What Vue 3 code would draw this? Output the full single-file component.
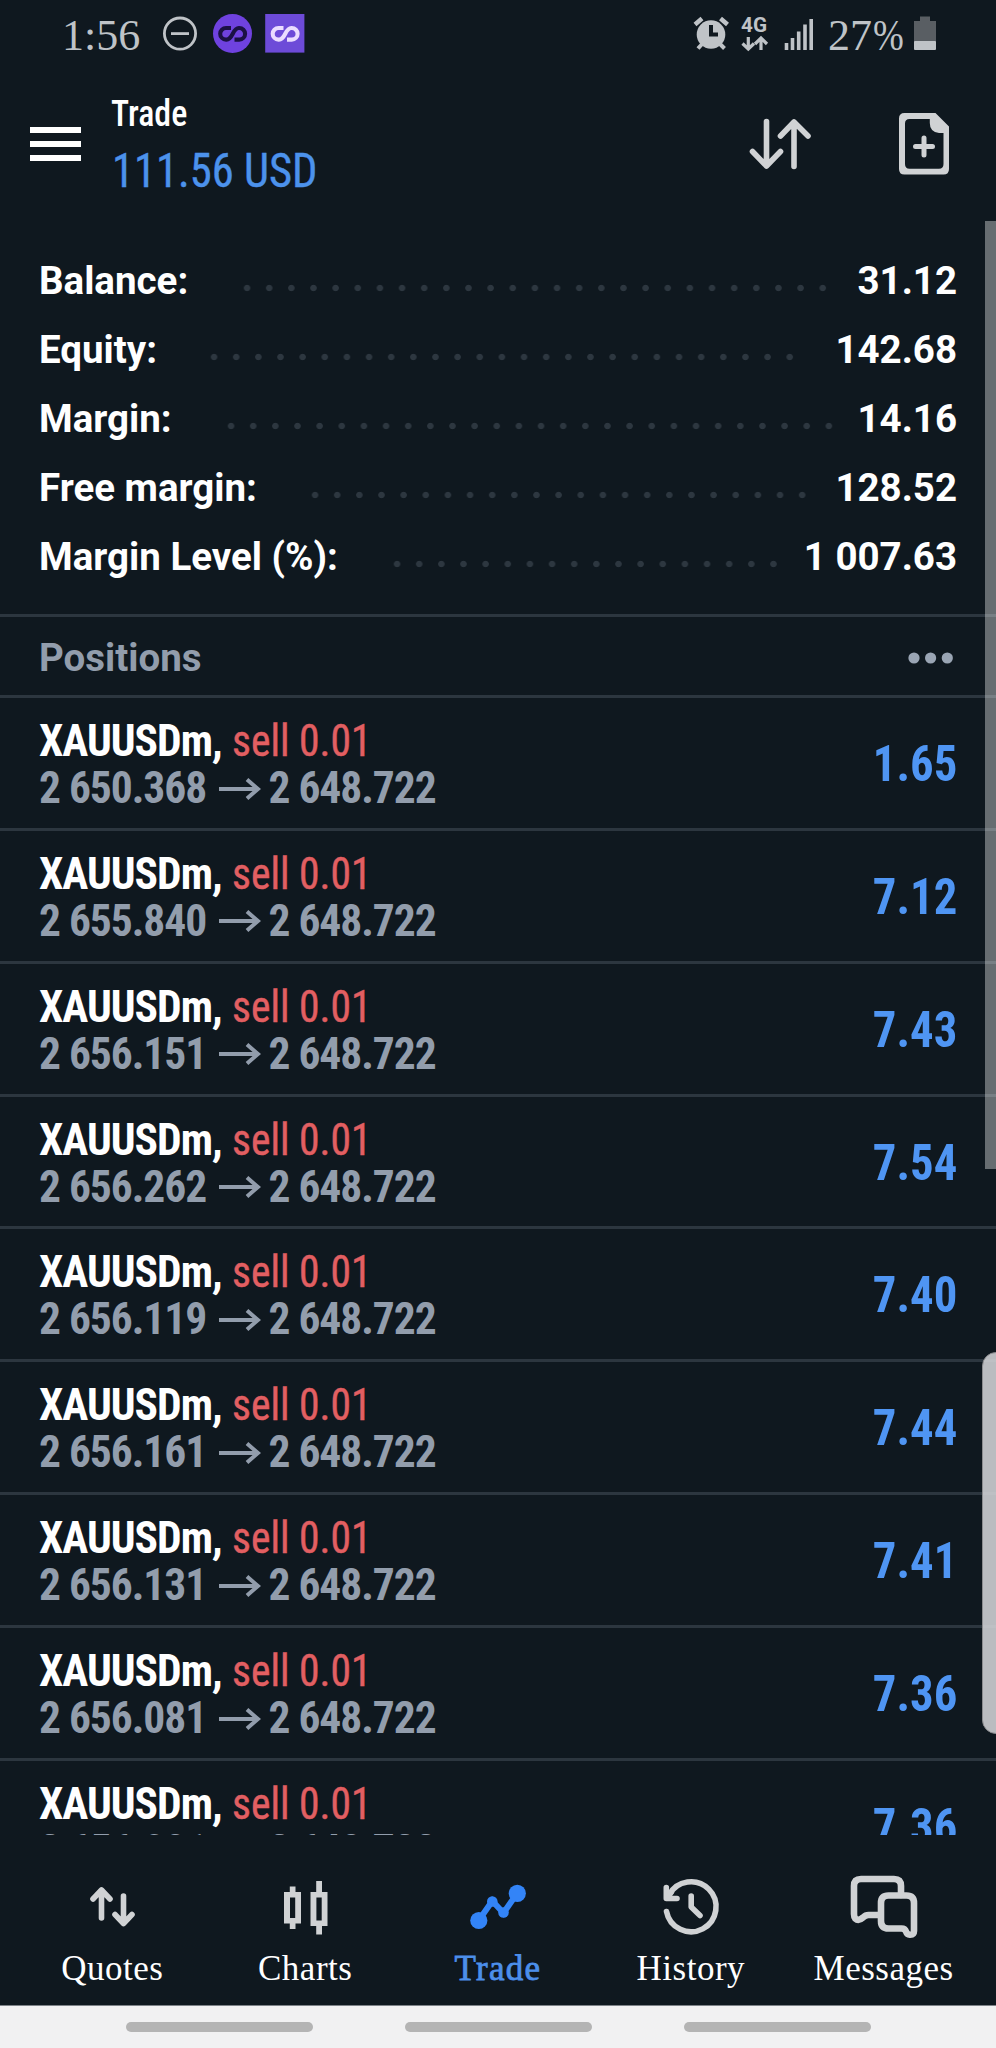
<script setup>
const summary = [
  { label: 'Balance:', value: '31.12', start: 236, dots: 27 },
  { label: 'Equity:', value: '142.68', start: 203, dots: 27 },
  { label: 'Margin:', value: '14.16', start: 220, dots: 28 },
  { label: 'Free margin:', value: '128.52', start: 304, dots: 23 },
  { label: 'Margin Level (%):', value: '1 007.63', start: 386, dots: 18 },
]
const dotPitch = 22.15

const positions = [
  ['2 650.368', '1.65'],
  ['2 655.840', '7.12'],
  ['2 656.151', '7.43'],
  ['2 656.262', '7.54'],
  ['2 656.119', '7.40'],
  ['2 656.161', '7.44'],
  ['2 656.131', '7.41'],
  ['2 656.081', '7.36'],
  ['2 656.081', '7.36'],
].map(([open, profit]) => ({ open, profit, current: '2 648.722' }))
</script>

<template>
  <div class="screen">
    <div class="status">
      <span class="clock">1:56</span>
      <svg class="status-icons" width="150" height="50" viewBox="158 8 150 50">
        <g fill="none" stroke="#bfc3c7" stroke-width="2.8">
          <circle cx="180" cy="33.6" r="15.6" />
          <path d="M171 33.6H189" />
        </g>
        <circle cx="232.5" cy="33.5" r="19.5" fill="#6f42df" />
        <rect x="265.2" y="14" width="39.2" height="38.6" fill="#6d4bd8" />
        <g fill="none" stroke-width="4.1">
          <path class="knot dark" d="M231 28H226A5.800 5.800 0 0 0 226 39.600H226.500C233 39.600 232.500 28 238.800 28H239.300A5.800 5.800 0 0 1 239.300 39.600H234.500" />
          <path class="knot light" d="M283.500 28H278.500A5.800 5.800 0 0 0 278.500 39.600H279C285.500 39.600 285 28 291.300 28H291.800A5.800 5.800 0 0 1 291.800 39.600H287" />
        </g>
      </svg>
      <svg class="status-icons right" width="136" height="50" viewBox="690 8 136 50">
        <g stroke="#bfc3c7" fill="none">
          <circle cx="711" cy="34.5" r="14.3" fill="#bfc3c7" stroke="none" />
          <path d="M695 24.5L702 18.5M727.5 24.5L720.5 18.5" stroke-width="4.5" />
          <path d="M703 43L698 48.5M719 43L724.5 48.5" stroke-width="4" />
          <path d="M711 25V34.5H718" stroke="#0f181f" stroke-width="4" />
          <path d="M748.3 37V49M742.5 43.5L748.3 49L754 43.5" stroke-width="3.2" />
          <path d="M761 50V38.5M755 44L761 38L767 44" stroke-width="3.2" />
          <path d="M786.5 43V50M792.5 38V50M798.7 31.5V50M805 24.5V50M811.2 19V50" stroke-width="3.6" />
        </g>
        <text x="741" y="32" class="net" textLength="26" lengthAdjust="spacingAndGlyphs">4G</text>
      </svg>
      <span class="percent">27<span class="pct">%</span></span>
      <svg class="battery" width="24" height="36" viewBox="913 15 24 36">
        <path d="M914 21H920V16.5H930V21H936V42H914Z" fill="#595e63" />
        <rect x="914" y="41" width="22" height="9" rx="1" fill="#bfc3c7" />
      </svg>
    </div>

    <header class="header">
      <div class="burger"><i></i><i></i><i></i></div>
      <div class="titles">
        <div class="title">Trade</div>
        <div class="total">111.56 USD</div>
      </div>
      <svg class="actions" width="206" height="70" viewBox="746 109 206 70">
        <g fill="none" stroke="#d0d2d4" stroke-width="5.6" stroke-linecap="round" stroke-linejoin="round">
          <path d="M766.5 121.5V166M752.5 151.5L766.5 166L780.5 151.5" />
          <path d="M794 166.5V122M780.5 136L794 122L808 136" />
          <path d="M924 138V155M915.5 146.5H932.5" stroke-width="5" />
        </g>
        <path
          fill="#d0d2d4"
          fill-rule="evenodd"
          d="M904.5 113H935.5L949 126.5V169Q949 174.500 943.500 174.500H904.500Q899 174.500 899 169V118.500Q899 113 904.500 113ZM909.500 119Q905 119 905 123.500V164Q905 168.800 909.500 168.800H939Q943.500 168.800 943.500 164V133H939Q929.800 132 929.800 123V119Z"
        />
      </svg>
    </header>

    <main class="content">
      <section class="summary">
        <div v-for="row in summary" :key="row.label" class="sum-row">
          <span class="sum-label" :style="{ width: row.start - 39 + 'px' }">{{ row.label }}</span>
          <span class="leader" :style="{ width: row.dots * dotPitch + 'px' }"></span>
          <span class="sum-value">{{ row.value }}</span>
        </div>
      </section>

      <div class="section-head">
        <span>Positions</span>
        <svg width="46" height="12" viewBox="0 0 46 12" fill="#9aa5b4">
          <circle cx="6" cy="6" r="5.6" /><circle cx="22.6" cy="6" r="5.6" /><circle cx="39.3" cy="6" r="5.6" />
        </svg>
      </div>

      <div v-for="(p, i) in positions" :key="i" class="position">
        <div>
          <div class="deal"><b>XAUUSDm,</b><span>sell 0.01</span></div>
          <div class="prices">
            <span>{{ p.open }}</span>
            <svg width="42" height="22" viewBox="0 0 42 22" fill="none" stroke="#929dac" stroke-width="4">
              <path d="M0 11H39M28 1.5L39 11L28 20.5" />
            </svg>
            <span>{{ p.current }}</span>
          </div>
        </div>
        <div class="profit">{{ p.profit }}</div>
      </div>
      <div class="scrollbar"></div>
    </main>

    <nav class="tabs">
      <div class="tab">
        <svg width="80" height="70" viewBox="72 1870 80 70" class="line">
          <path d="M101.5 1918V1890M93 1899L101.5 1890L110 1899M123.5 1896V1923.5M115 1914.5L123.5 1923.5L132 1914.5" />
        </svg>
        <span>Quotes</span>
      </div>
      <div class="tab">
        <svg width="80" height="70" viewBox="264.5 1870 80 70">
          <path fill="#d0d2d4" fill-rule="evenodd" d="M289.3 1886.5H295V1892H300.5V1923.5H295V1929H289.3V1923.5H283.5V1892H289.3ZM289.5 1897.5V1918H294.7V1897.5ZM315.7 1881H321.5V1892H327V1926H321.5V1934.5H315.7V1926H310V1892H315.7ZM315.9 1897.5V1920.5H321.2V1897.5Z" />
        </svg>
        <span>Charts</span>
      </div>
      <div class="tab active">
        <svg width="80" height="70" viewBox="458 1870 80 70">
          <path d="M479 1920L492.3 1901L503.5 1913L517.3 1893" fill="none" stroke="#3384f7" stroke-width="6" />
          <g fill="#3384f7"><circle cx="478.8" cy="1920.5" r="8.6" /><circle cx="517.3" cy="1893.3" r="8.6" /><circle cx="492.3" cy="1901.5" r="5.3" /><circle cx="503.5" cy="1912.5" r="5.3" /></g>
        </svg>
        <span>Trade</span>
      </div>
      <div class="tab">
        <svg width="80" height="70" viewBox="650.5 1870 80 70" class="line">
          <path d="M666 1911.5A25 25 0 1 0 668.5 1895" />
          <path d="M665.8 1887.5V1898.5H676.5M666.5 1897.5L671 1892M690.7 1896V1907L699.5 1915.5" />
        </svg>
        <span>History</span>
      </div>
      <div class="tab">
        <svg width="80" height="70" viewBox="843.5 1870 80 70" class="line wide">
          <path d="M878 1915H868Q865 1915 862.5 1917.5Q858 1921.5 854.8 1918.5Q853.5 1917 853.5 1914V1886Q853.5 1879 860.5 1879H893.5Q900.5 1879 900.5 1886V1895" />
          <path d="M888 1895.5H906Q913.5 1895.5 913.5 1903V1931Q913.5 1934.5 909.5 1934.8Q906.5 1934.5 905.5 1931.5Q904.5 1928.5 901 1928.5H888Q880.5 1928.5 880.5 1921V1903Q880.5 1895.5 888 1895.5Z" />
        </svg>
        <span>Messages</span>
      </div>
    </nav>

    <div class="gestures"><i></i><i></i><i></i></div>
    <div class="edge-handle"></div>
  </div>
</template>

<style>
body {
  background: #0f181f;
}
</style>

<style scoped>
.screen {
  position: relative;
  width: 996px;
  height: 2048px;
  overflow: hidden;
  display: flex;
  flex-direction: column;
  background: #0f181f;
  color: #fff;
  font-family: Roboto, sans-serif;
}
svg {
  display: block;
  flex: none;
}
.status {
  display: flex;
  height: 70px;
  flex: none;
  color: #bfc3c7;
  font: 44px/50px 'Liberation Serif', serif;
  padding: 8px 0 0 62px;
  box-sizing: border-box;
  white-space: nowrap;
}
.clock {
  width: 96px;
  padding-top: 3px;
}
.knot.dark {
  stroke: #1b1145;
}
.knot.light {
  stroke: #eadcff;
}
.status-icons.right {
  margin-left: 382px;
}
.net {
  font: 700 21px Roboto, sans-serif;
  fill: #bfc3c7;
}
.percent {
  width: 85px;
  margin-left: 2px;
  padding-top: 3px;
}
.pct {
  display: inline-block;
  transform: scaleX(0.84);
  transform-origin: 0 50%;
  margin-left: 1px;
}
.battery {
  margin-top: 7px;
}
.header {
  display: flex;
  flex: none;
  height: 151px;
  font-family: 'Roboto Condensed', Roboto, sans-serif;
}
.burger {
  display: flex;
  flex-direction: column;
  gap: 8px;
  margin: 57px 0 0 30px;
  width: 81px;
}
.burger i {
  width: 50.5px;
  height: 6px;
  background: #fff;
}
.titles {
  width: 635px;
  padding-top: 20px;
}
.title {
  font-size: 36.5px;
  line-height: 48px;
  font-weight: 500;
  transform: scaleX(0.93);
  transform-origin: 0 50%;
}
.total {
  margin: 5px 0 0 1px;
  font-size: 48px;
  line-height: 56px;
  color: #4c92ec;
  -webkit-text-stroke: 0.4px #4c92ec;
  transform: scaleX(0.928);
  transform-origin: 0 50%;
}
.actions {
  margin-top: 39px;
}
.content {
  position: relative;
  flex: none;
  height: 1614px;
  overflow: hidden;
}
.summary {
  height: 393px;
  padding: 24.5px 39px 0;
  box-sizing: border-box;
}
.sum-row {
  display: flex;
  height: 69.2px;
  font-size: 38.5px;
  line-height: 69.2px;
  font-weight: 700;
  white-space: nowrap;
}
.sum-label {
  flex: none;
}
.leader {
  flex: none;
  height: 8px;
  margin-top: 38px;
  background: radial-gradient(circle at 11.07px 4px, #2d3740 2.8px, transparent 3.6px) 0 0 / 22.15px 8px repeat-x;
}
.sum-value {
  margin-left: auto;
}
.section-head {
  display: flex;
  justify-content: space-between;
  align-items: center;
  height: 78px;
  padding: 3px 42px 0 39px;
  border-top: 3px solid #2c363f;
  border-bottom: 3px solid #2c363f;
  box-sizing: border-box;
  height: 84px;
  color: #929dac;
  font-size: 38.5px;
  font-weight: 700;
}
.position {
  display: flex;
  justify-content: space-between;
  height: 132.87px;
  padding: 20px 39px 0 39px;
  border-bottom: 3px solid #2c363f;
  box-sizing: border-box;
  font-family: 'Roboto Condensed', Roboto, sans-serif;
  white-space: nowrap;
}
.deal {
  display: flex;
  height: 47px;
  font-size: 43.5px;
  line-height: 47px;
}
.deal b {
  width: 192.5px;
  letter-spacing: -1px;
}
.deal span {
  color: #e25f62;
  -webkit-text-stroke: 0.4px #e25f62;
  transform: scaleX(0.955);
  transform-origin: 0 50%;
}
.prices {
  display: flex;
  align-items: center;
  height: 47px;
  color: #929dac;
  font-size: 43.5px;
  line-height: 47px;
  font-weight: 700;
  letter-spacing: -1.05px;
}
.prices span:first-child {
  width: 179.500px;
}
.prices svg {
  margin-right: 8px;
}
.profit {
  padding-top: 16px;
  font-size: 50px;
  line-height: 60px;
  font-weight: 700;
  color: #4f95f3;
  transform: scaleX(0.935);
  transform-origin: 100% 50%;
}
.scrollbar {
  position: absolute;
  top: 0;
  right: 0;
  width: 11px;
  height: 948px;
  background: rgba(255, 255, 255, 0.37);
}
.tabs {
  display: flex;
  flex: none;
  height: 171px;
  padding: 0 16px;
  border-bottom: 1px solid #7d8288;
  box-sizing: border-box;
  font: 35px/44px 'Liberation Serif', serif;
}
.tab {
  flex: 1;
  display: flex;
  flex-direction: column;
  align-items: center;
  padding-top: 35px;
  letter-spacing: 0.5px;
}
.tab span {
  margin-top: 7px;
}
.active {
  color: #4c8fea;
  letter-spacing: 1.3px;
  -webkit-text-stroke: 0.8px #4c8fea;
}
.line {
  fill: none;
  stroke: #d0d2d4;
  stroke-width: 5.6px;
  stroke-linecap: round;
  stroke-linejoin: round;
}
.wide {
  stroke-width: 6.6px;
}
.gestures {
  display: flex;
  flex: none;
  gap: 92px;
  height: 42px;
  padding: 15.5px 0 0 125.5px;
  box-sizing: border-box;
  background: #f1f1f2;
}
.gestures i {
  width: 187px;
  height: 10px;
  border-radius: 5px;
  background: #b4b4b4;
}
.edge-handle {
  position: absolute;
  top: 1352px;
  right: -3px;
  width: 17px;
  height: 382px;
  box-sizing: border-box;
  border: 1.5px solid #8b8c8f;
  border-radius: 14px 0 0 14px;
  background: rgba(212, 213, 216, 0.87);
}
</style>
